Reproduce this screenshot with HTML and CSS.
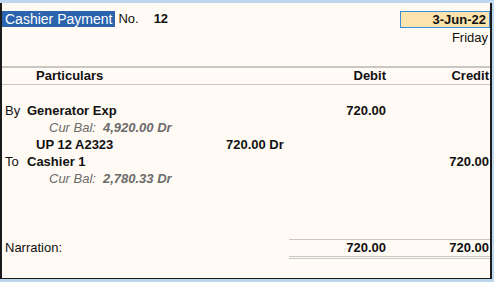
FILE: index.html
```html
<!DOCTYPE html>
<html lang="en">
<head>
    <meta charset="UTF-8">
    <title>Cashier Payment</title>
    <link rel="stylesheet" href="styles.css">
</head>
<body>
    <div class="voucher">
        <div class="head">
            <div class="title-line">
                <span class="vtype">Cashier Payment</span>
                <span class="no-label">No.</span>
                <span class="no-value">12</span>
            </div>
            <div class="date-col">
                <div class="date-box">3-Jun-22</div>
                <div class="day">Friday</div>
            </div>
        </div>

        <div class="cols">
            <div class="part part-head">Particulars</div>
            <div class="debit">Debit</div>
            <div class="credit">Credit</div>
        </div>

        <div class="entries">
            <div class="row">
                <div class="part"><span class="side">By</span><b>Generator Exp</b></div>
                <div class="debit"><b>720.00</b></div>
                <div class="credit"></div>
            </div>
            <div class="row">
                <div class="part bal"><span>Cur Bal:</span><b>4,920.00 Dr</b></div>
            </div>
            <div class="row">
                <div class="part ref"><b class="ref-name">UP 12 A2323</b><b>720.00 Dr</b></div>
            </div>
            <div class="row">
                <div class="part"><span class="side">To</span><b>Cashier 1</b></div>
                <div class="debit"></div>
                <div class="credit"><b>720.00</b></div>
            </div>
            <div class="row">
                <div class="part bal"><span>Cur Bal:</span><b>2,780.33 Dr</b></div>
            </div>
        </div>

        <div class="foot">
            <div class="narration">Narration:</div>
            <div class="totals">
                <div class="debit"><b>720.00</b></div>
                <div class="credit"><b>720.00</b></div>
            </div>
        </div>
    </div>
</body>
</html>
```

FILE: styles.css
```css
body {
    margin: 0;
    background: #bcd7ee;
    font-family: 'Liberation Sans', Arial, sans-serif;
    font-size: 13px;
    color: #111;
}

.voucher {
    box-sizing: border-box;
    width: 492px;
    height: 276px;
    margin-top: 3px;
    background: #fffaf3;
    border-left: 2px solid #1b1b1b;
    border-right: 2px solid #1b1b1b;
    border-bottom: 1px solid #1b1b1b;
    display: flex;
    flex-direction: column;
}

.head {
    height: 63px;
    box-sizing: border-box;
    padding-top: 8px;
    display: flex;
    justify-content: space-between;
}
.title-line {
    display: flex;
    height: 16px;
    line-height: 16px;
}
.vtype {
    background: #2b63ad;
    color: #fff;
    font-size: 14px;
    padding: 0 3px 0 3px;
}
.no-label {
    margin-left: 3px;
}
.no-value {
    font-weight: bold;
    margin-left: 15px;
}
.date-col {
    width: 90px;
    text-align: right;
}
.date-box {
    box-sizing: border-box;
    height: 17px;
    line-height: 15px;
    background: #fde4ad;
    border: 1px solid #3a8ed5;
    padding-right: 3px;
    font-weight: bold;
}
.day {
    margin-top: 2px;
    line-height: 16px;
    padding-right: 2px;
}

.cols {
    display: flex;
    height: 16px;
    line-height: 16px;
    font-weight: bold;
    border-top: 2px solid #c9c7c3;
    border-bottom: 1px solid #c9c7c3;
}
.part {
    flex: 1;
}
.part-head {
    padding-left: 34px;
}
.debit {
    width: 97px;
    text-align: right;
}
.credit {
    width: 104px;
    box-sizing: border-box;
    padding-right: 1px;
    text-align: right;
}

.entries {
    flex: 1;
    padding-top: 17px;
}
.row {
    display: flex;
    height: 17px;
    line-height: 17px;
}
.side {
    display: inline-block;
    width: 22px;
    padding-left: 3px;
}
.bal {
    padding-left: 47px;
    font-style: italic;
    color: #6b6b6b;
}
.bal b {
    margin-left: 7px;
}
.ref {
    padding-left: 34px;
}
.ref-name {
    display: inline-block;
    width: 190px;
}

.foot {
    display: flex;
    margin-bottom: 19px;
}
.narration {
    flex: 1;
    padding-left: 3px;
    padding-top: 1px;
    line-height: 16px;
}
.totals {
    display: flex;
    width: 201px;
    line-height: 16px;
    border-top: 1px solid #c9c7c3;
    border-bottom: 3px double #c9c7c3;
}
```
